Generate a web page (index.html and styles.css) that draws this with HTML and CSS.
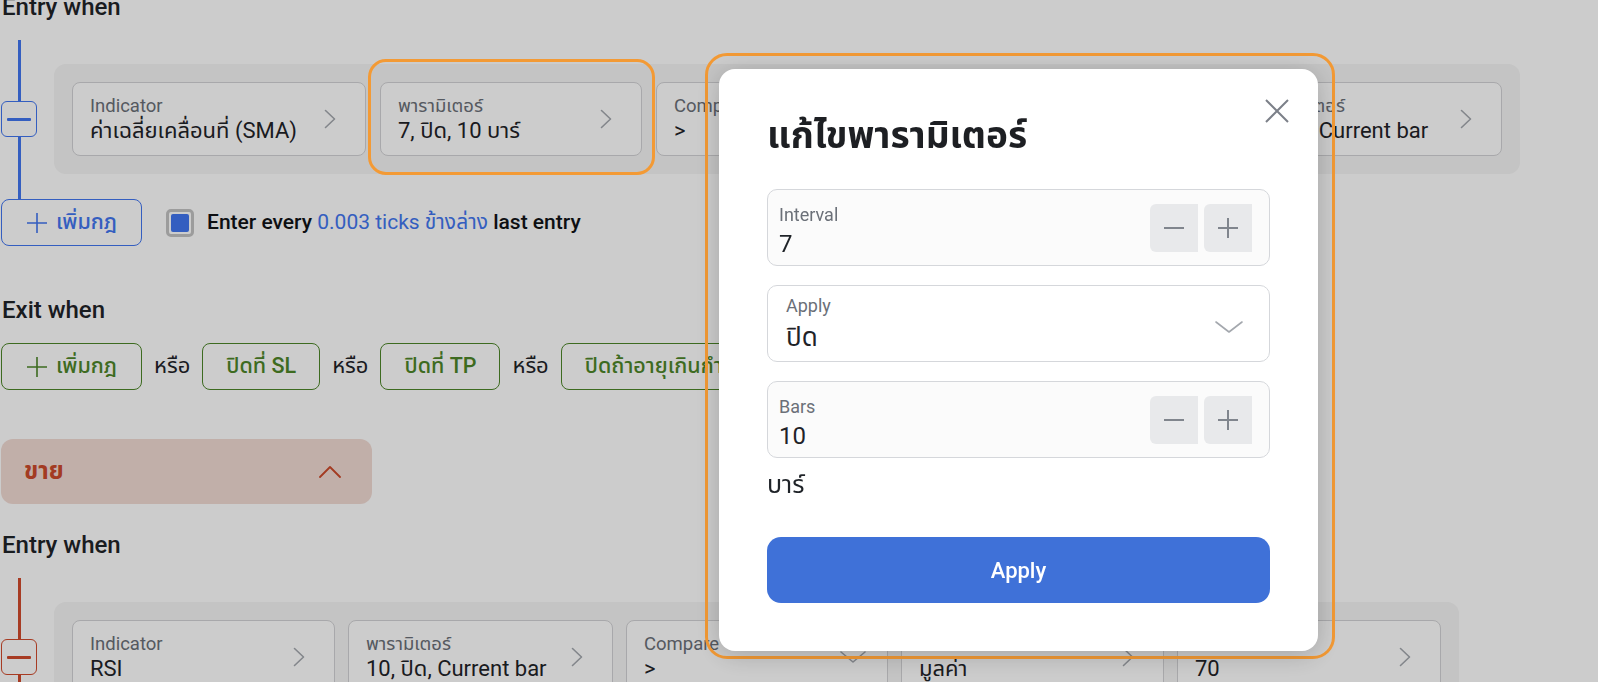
FILE: index.html
```html
<!DOCTYPE html>
<html lang="th">
<head>
<meta charset="utf-8">
<title>แก้ไขพารามิเตอร์</title>
<link rel="stylesheet" href="styles.css">
</head>
<body>
<div class="page">
  <h2 class="heading">Entry when</h2>
  <div class="rule rule-blue">
    <button class="rm rm-blue" type="button"><span class="rm-bar"></span></button>
    <div class="row row-top">
      <div class="card"><div class="card-text"><div class="lbl">Indicator</div><div class="val">ค่าเฉลี่ยเคลื่อนที่ (SMA)</div></div><svg class="chev-r" viewBox="0 0 12 20"><polyline points="1.5,1.5 10.5,10 1.5,18.5"/></svg></div>
      <div class="card"><div class="card-text"><div class="lbl">พารามิเตอร์</div><div class="val">7, ปิด, 10 บาร์</div></div><svg class="chev-r" viewBox="0 0 12 20"><polyline points="1.5,1.5 10.5,10 1.5,18.5"/></svg></div>
      <div class="card"><div class="card-text"><div class="lbl">Compare</div><div class="val">&gt;</div></div><svg class="chev-d" viewBox="0 0 26 12"><polyline points="1,1 13,11 25,1"/></svg></div>
      <div class="card"><div class="card-text"><div class="lbl">Indicator</div><div class="val">ราคา</div></div><svg class="chev-r" viewBox="0 0 12 20"><polyline points="1.5,1.5 10.5,10 1.5,18.5"/></svg></div>
      <div class="card"><div class="card-text"><div class="lbl">พารามิเตอร์</div><div class="val">1, ปิด, Current bar</div></div><svg class="chev-r" viewBox="0 0 12 20"><polyline points="1.5,1.5 10.5,10 1.5,18.5"/></svg></div>
    </div>
  </div>
  <div class="add-row">
    <button class="btn-outline btn-blue" type="button"><svg class="plus" viewBox="0 0 20 20"><path d="M10 0V20M0 10H20"/></svg>เพิ่มกฎ</button>
    <label class="chk"><span class="chk-box"><span class="chk-fill"></span></span><span class="chk-text">Enter every <span class="link">0.003 ticks ข้างล่าง</span> last entry</span></label>
  </div>

  <h2 class="heading heading-exit">Exit when</h2>
  <div class="exit-row">
    <button class="btn-outline btn-green" type="button"><svg class="plus" viewBox="0 0 20 20"><path d="M10 0V20M0 10H20"/></svg>เพิ่มกฎ</button>
    <span class="or">หรือ</span>
    <button class="btn-outline btn-green btn-pad" type="button">ปิดที่ SL</button>
    <span class="or">หรือ</span>
    <button class="btn-outline btn-green btn-pad" type="button">ปิดที่ TP</button>
    <span class="or">หรือ</span>
    <button class="btn-outline btn-green btn-pad" type="button">ปิดถ้าอายุเกินกำหนด</button>
  </div>

  <div class="sell">
    <span>ขาย</span>
    <svg class="chev-up" viewBox="0 0 22 12"><polyline points="1,11 11,1 21,11"/></svg>
  </div>

  <h2 class="heading heading-sell">Entry when</h2>
  <div class="rule rule-red">
    <button class="rm rm-red" type="button"><span class="rm-bar"></span></button>
    <div class="row row-bottom">
      <div class="card"><div class="card-text"><div class="lbl">Indicator</div><div class="val">RSI</div></div><svg class="chev-r" viewBox="0 0 12 20"><polyline points="1.5,1.5 10.5,10 1.5,18.5"/></svg></div>
      <div class="card"><div class="card-text"><div class="lbl">พารามิเตอร์</div><div class="val">10, ปิด, Current bar</div></div><svg class="chev-r" viewBox="0 0 12 20"><polyline points="1.5,1.5 10.5,10 1.5,18.5"/></svg></div>
      <div class="card"><div class="card-text"><div class="lbl">Compare</div><div class="val">&gt;</div></div><svg class="chev-d" viewBox="0 0 26 12"><polyline points="1,1 13,11 25,1"/></svg></div>
      <div class="card"><div class="card-text"><div class="lbl">เปรียบเทียบกับ</div><div class="val">มูลค่า</div></div><svg class="chev-r" viewBox="0 0 12 20"><polyline points="1.5,1.5 10.5,10 1.5,18.5"/></svg></div>
      <div class="card"><div class="card-text"><div class="lbl">ค่า</div><div class="val">70</div></div><svg class="chev-r" viewBox="0 0 12 20"><polyline points="1.5,1.5 10.5,10 1.5,18.5"/></svg></div>
    </div>
  </div>
</div>

<div class="backdrop"></div>
<div class="hl hl-card"></div>
<div class="hl hl-modal"></div>

<div class="modal" role="dialog">
  <button class="close" type="button" aria-label="close"><svg viewBox="0 0 24 24"><path d="M1 1L23 23M23 1L1 23"/></svg></button>
  <h1 class="m-title">แก้ไขพารามิเตอร์</h1>
  <div class="fields">
    <div class="field">
      <div class="f-text"><div class="f-lbl">Interval</div><div class="f-val">7</div></div>
      <div class="stepper">
        <span class="step"><svg viewBox="0 0 22 22"><path d="M1 11H21"/></svg></span>
        <span class="step"><svg viewBox="0 0 22 22"><path d="M1 11H21M11 1V21"/></svg></span>
      </div>
    </div>
    <div class="field field-select">
      <div class="f-text f-text-select"><div class="f-lbl">Apply</div><div class="f-val f-val-select">ปิด</div></div>
      <svg class="sel-chev" viewBox="0 0 28 12"><polyline points="1,1 14,11 27,1"/></svg>
    </div>
    <div class="field">
      <div class="f-text"><div class="f-lbl">Bars</div><div class="f-val">10</div></div>
      <div class="stepper">
        <span class="step"><svg viewBox="0 0 22 22"><path d="M1 11H21"/></svg></span>
        <span class="step"><svg viewBox="0 0 22 22"><path d="M1 11H21M11 1V21"/></svg></span>
      </div>
    </div>
  </div>
  <div class="unit">บาร์</div>
  <button class="apply" type="button">Apply</button>
</div>
</body>
</html>
```

FILE: styles.css
```css
* { box-sizing: border-box; }
html, body { margin: 0; padding: 0; }
body {
  width: 1598px;
  height: 682px;
  overflow: hidden;
  display: flow-root;
  background: #ffffff;
  font-family: Roboto, "Noto Sans Thai", "Noto Sans", sans-serif;
  color: #1f2328;
}
button { font-family: inherit; cursor: pointer; }

.page { margin-top: -7px; padding-left: 1px; }

.heading {
  margin: 0 0 19px;
  padding-left: 1px;
  font-size: 24px;
  line-height: 28px;
  font-weight: 500;
  color: #1f2328;
}
.heading-exit { margin-top: 50px; }
.heading-sell { margin-top: 27px; }

/* rule block with vertical rail */
.rule {
  display: flex;
  align-items: center;
  padding: 24px 0 25px;
  background-repeat: no-repeat;
  background-size: 3px 100%;
  background-position: 17px 0;
}
.rule-blue { background-image: linear-gradient(#4276f0, #4276f0); }
.rule-red { background-image: linear-gradient(#d14a2c, #d14a2c); }

.rm {
  flex: 0 0 36px;
  width: 36px;
  height: 36px;
  margin-right: 17px;
  padding: 0;
  border: 1px solid;
  border-radius: 6px;
  background: #ffffff;
  display: flex;
  align-items: center;
  justify-content: center;
}
.rm-bar { display: block; width: 24px; height: 3px; border-radius: 1px; }
.rm-blue { border-color: #4276f0; }
.rm-blue .rm-bar { background: #4276f0; }
.rm-red { border-color: #d14a2c; }
.rm-red .rm-bar { background: #d14a2c; }

.row {
  display: grid;
  gap: 14px;
  padding: 18px;
  background: #f5f5f5;
  border-radius: 12px;
}
.row-top { grid-template-columns: 294px 262px 279px 279px 260px; }
.row-bottom { grid-template-columns: 263px 265px 262px 263px 264px; gap: 13px; }

.card {
  height: 74px;
  border: 1px solid #d3d3d6;
  border-radius: 8px;
  background: #ffffff;
  display: flex;
  align-items: center;
  justify-content: space-between;
  padding: 0 29px 0 17px;
  overflow: hidden;
}
.card-text { min-width: 0; white-space: nowrap; }
.lbl { font-size: 18.5px; line-height: 22px; color: #6b7078; }
.val { font-size: 22px; line-height: 26px; color: #1f2328; margin-top: 1px; }
.chev-r { width: 12px; height: 20px; flex: 0 0 12px; }
.chev-r polyline, .chev-d polyline {
  fill: none; stroke: #a4a8ae; stroke-width: 1.6; stroke-linecap: round; stroke-linejoin: round;
}
.chev-d { width: 26px; height: 12px; flex: 0 0 26px; margin-right: -8px; }

/* buttons */
.add-row { display: flex; align-items: center; gap: 24px; }
.btn-outline {
  height: 47px;
  border: 1px solid;
  border-radius: 8px;
  background: #ffffff;
  display: inline-flex;
  align-items: center;
  gap: 9px;
  padding: 0 24px 0 25px;
  font-size: 21.5px;
  font-weight: 500;
  white-space: nowrap;
}
.btn-pad { padding: 0 23px; }
.btn-blue { border-color: #4276f0; color: #4276f0; }
.btn-green { border-color: #4d8629; color: #4d8629; }
.plus { width: 20px; height: 20px; }
.plus path { stroke: currentColor; stroke-width: 1.6; fill: none; }

.chk { display: flex; align-items: center; gap: 13px; font-size: 21px; font-weight: 500; color: #111317; }
.chk-box {
  width: 28px; height: 28px;
  border: 3px solid #c4c4c4;
  border-radius: 5px;
  padding: 2px;
  background: #ffffff;
}
.chk-fill { display: block; width: 18px; height: 18px; border-radius: 2px; background: #4276f0; }
.link { color: #4276f0; font-weight: 400; }

.exit-row { display: flex; align-items: center; gap: 12px; }
.or { font-size: 22px; color: #1f2328; }

.sell {
  margin-top: 49px;
  width: 371px;
  height: 65px;
  border-radius: 12px;
  background: #f2dbd4;
  color: #cc4a2b;
  font-size: 24px;
  font-weight: 700;
  display: flex;
  align-items: center;
  justify-content: space-between;
  padding: 0 31px 0 23px;
}
.chev-up { width: 22px; height: 12px; }
.chev-up polyline { fill: none; stroke: #cc4a2b; stroke-width: 1.8; stroke-linecap: round; stroke-linejoin: round; }

/* overlay */
.backdrop { position: fixed; inset: 0; background: rgba(0, 0, 0, 0.2); }
.hl {
  position: fixed;
  border: 3px solid #f39a35;
  pointer-events: none;
}
.hl-card { left: 368px; top: 59px; width: 287px; height: 116px; border-radius: 18px; }
.hl-modal { left: 705px; top: 53px; width: 630px; height: 606px; border-radius: 22px; }

.modal {
  position: fixed;
  left: 719px;
  top: 69px;
  width: 599px;
  height: 582px;
  background: #ffffff;
  border-radius: 16px;
  box-shadow: 0 4px 26px rgba(0, 0, 0, 0.2);
  padding: 0 48px;
  display: flex;
  flex-direction: column;
}
.close {
  position: absolute;
  top: 30px;
  right: 29px;
  width: 24px;
  height: 24px;
  padding: 0;
  border: 0;
  background: none;
}
.close svg { width: 24px; height: 24px; display: block; }
.close path { stroke: #7c8089; stroke-width: 2; fill: none; }

.m-title {
  margin: 44px 0 31px;
  font-size: 37px;
  line-height: 45px;
  font-weight: 700;
  color: #1d1f23;
}
.fields { display: flex; flex-direction: column; gap: 19px; }
.field {
  height: 77px;
  border: 1px solid #d5d7db;
  border-radius: 10px;
  background: #fbfbfb;
  display: flex;
  align-items: center;
  padding: 0 17px 0 11px;
}
.f-text { flex: 1; align-self: flex-start; padding-top: 14px; }
.f-lbl { font-size: 18px; line-height: 22px; color: #6b7078; }
.f-val { font-size: 24px; line-height: 30px; margin-top: 3px; color: #1f2328; }
.field-select { background: #ffffff; padding: 0 26px 0 18px; }
.f-text-select { padding-top: 9px; }
.f-val-select { margin-top: 5px; font-size: 26px; }
.sel-chev { width: 28px; height: 12px; margin-top: 6px; }
.sel-chev polyline { fill: none; stroke: #a4a8ae; stroke-width: 1.6; stroke-linecap: round; stroke-linejoin: round; }

.stepper { display: flex; gap: 6px; }
.step {
  width: 48px;
  height: 48px;
  background: #e8e9eb;
  border-radius: 6px 0 0 6px;
  display: flex;
  align-items: center;
  justify-content: center;
}
.step svg { width: 22px; height: 22px; }
.step path { stroke: #80858d; stroke-width: 2; fill: none; }

.unit { margin-top: 12px; font-size: 25px; line-height: 30px; color: #1f2328; }
.apply {
  margin-top: 37px;
  height: 66px;
  border: 0;
  border-radius: 14px;
  background: #3f71d8;
  color: #ffffff;
  font-size: 22px;
  font-weight: 500;
}
```
